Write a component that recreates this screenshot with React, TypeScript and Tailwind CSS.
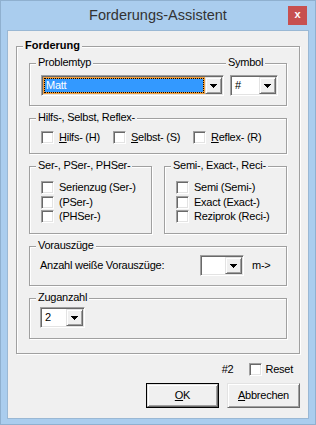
import type { ReactNode } from 'react'

const sunken =
  'border border-t-[#a0a0a0] border-l-[#a0a0a0] border-b-white border-r-white shadow-[inset_1px_1px_0_#696969,inset_-1px_-1px_0_#e3e3e3]'
const raised =
  'border border-t-[#e3e3e3] border-l-[#e3e3e3] border-b-[#696969] border-r-[#696969] shadow-[inset_1px_1px_0_#fff,inset_-1px_-1px_0_#a0a0a0]'

function Group({ className = '', children }: { className?: string; children: ReactNode }) {
  return (
    <div className={`relative border border-[#a0a0a0] shadow-[inset_1px_1px_0_#fff,1px_1px_0_#fff] ${className}`}>
      {children}
    </div>
  )
}

function Legend({ className = '', children }: { className?: string; children: ReactNode }) {
  return <span className={`absolute top-[-8px] bg-[#f0f0f0] px-[2px] leading-[13px] ${className}`}>{children}</span>
}

function Check() {
  return <span className={`h-[13px] w-[13px] shrink-0 bg-white ${sunken}`} />
}

function CheckItem({ className = '', children }: { className?: string; children: ReactNode }) {
  return (
    <label className={`flex h-[13px] items-center gap-[5px] ${className}`}>
      <Check />
      <span>{children}</span>
    </label>
  )
}

function DropButton() {
  return (
    <span className={`flex h-full w-[17px] shrink-0 items-center justify-center bg-[#f0f0f0] ${raised}`}>
      <svg width="7" height="4" viewBox="0 0 7 4" shapeRendering="crispEdges">
        <path d="M0 0h7v1h-1v1h-1v1h-1v1h-1v-1h-1v-1h-1v-1h-1z" fill="#000" />
      </svg>
    </span>
  )
}

function Combo({ className = '', children }: { className?: string; children?: ReactNode }) {
  return (
    <div className={`flex h-[21px] shrink-0 bg-white p-px ${sunken} ${className}`}>
      <div className="flex min-w-0 flex-1 items-center pl-[3px]">{children}</div>
      <DropButton />
    </div>
  )
}

export default function App() {
  return (
    <div className="flex h-[425px] w-[316px] flex-col border border-[#8fb0cf] bg-[#aacdee] font-['Liberation_Sans',Arial,sans-serif] text-[11px] leading-[13px] tracking-[-0.25px] text-black">
      <div className="relative flex h-[29px] shrink-0 items-center justify-center text-[14.5px] tracking-normal text-[#333]">
        Forderungs-Assistent
        <button
          type="button"
          className="absolute right-[8px] top-[5px] flex h-[19px] w-[19px] items-center justify-center bg-[#c75050] pb-[2px] text-[11px] font-bold text-white"
        >
          x
        </button>
      </div>

      <div className="mx-[6px] mb-[5px] flex flex-1 flex-col border border-[#9ab8d4] bg-[#f0f0f0]">
        <Group className="ml-[8px] mt-[15px] flex w-[284px] flex-col pb-[14px] pl-[12px] pt-[16px]">
          <Legend className="left-[6px] font-bold tracking-normal">Forderung</Legend>

          <Group className="flex h-[43px] w-[258px] shrink-0 gap-[6px] pl-[11px] pt-[11px]">
            <Legend className="left-[6px]">Problemtyp</Legend>
            <Legend className="left-[196px]">Symbol</Legend>
            <div className={`flex h-[21px] w-[183px] shrink-0 bg-white p-px ${sunken}`}>
              <div className="flex flex-1 bg-[#f0a040] p-px">
                <span className="flex flex-1 items-center border border-dotted border-black bg-[#3399ff] bg-clip-padding pl-[1px] text-white">
                  Matt
                </span>
              </div>
              <DropButton />
            </div>
            <Combo className="w-[48px]">#</Combo>
          </Group>

          <Group className="mt-[12px] flex h-[36px] w-[258px] shrink-0 pl-[11px] pt-[12px]">
            <Legend className="left-[6px]">Hilfs-, Selbst, Reflex-</Legend>
            <CheckItem className="w-[72px]">
              <u className="underline-offset-[1px]">H</u>ilfs- (H)
            </CheckItem>
            <CheckItem className="w-[80px]">
              <u className="underline-offset-[1px]">S</u>elbst- (S)
            </CheckItem>
            <CheckItem>
              <u className="underline-offset-[1px]">R</u>eflex- (R)
            </CheckItem>
          </Group>

          <div className="mt-[12px] flex gap-[12px]">
            <Group className="flex h-[68px] w-[123px] flex-col gap-[1.5px] pl-[11px] pt-[14px]">
              <Legend className="left-[6px]">Ser-, PSer-, PHSer-</Legend>
              <CheckItem>Serienzug (Ser-)</CheckItem>
              <CheckItem>(PSer-)</CheckItem>
              <CheckItem>(PHSer-)</CheckItem>
            </Group>
            <Group className="flex h-[68px] w-[123px] flex-col gap-[1.5px] pl-[11px] pt-[14px]">
              <Legend className="left-[6px]">Semi-, Exact-, Reci-</Legend>
              <CheckItem>Semi (Semi-)</CheckItem>
              <CheckItem>Exact (Exact-)</CheckItem>
              <CheckItem>Reziprok (Reci-)</CheckItem>
            </Group>
          </div>

          <Group className="mt-[12px] h-[40px] w-[258px] shrink-0 pl-[10px] pt-[8px]">
            <Legend className="left-[6px]">Vorauszüge</Legend>
            <div className="flex h-[21px] items-center">
              <span className="w-[160px]">Anzahl weiße Vorauszüge:</span>
              <Combo className="w-[44px]" />
              <span className="ml-[8px]">m-&gt;</span>
            </div>
          </Group>

          <Group className="mt-[12px] h-[41px] w-[258px] shrink-0 pl-[10px] pt-[8px]">
            <Legend className="left-[6px]">Zuganzahl</Legend>
            <Combo className="w-[45px]">2</Combo>
          </Group>
        </Group>

        <div className="mt-[9px] flex h-[13px] items-center justify-end pr-[15px]">
          <span className="mr-[15px]">#2</span>
          <Check />
          <span className="ml-[4px]">Reset</span>
        </div>

        <div className="mt-[7px] flex justify-end gap-[8px] pr-[8px]">
          <button type="button" className="h-[25px] w-[73px] border border-black bg-[#f0f0f0]">
            <span className={`flex h-full w-full items-center justify-center ${raised}`}>
              <u className="underline-offset-[1px]">O</u>K
            </span>
          </button>
          <button type="button" className={`flex h-[25px] w-[73px] items-center justify-center bg-[#f0f0f0] ${raised}`}>
            <span>
              <u className="underline-offset-[1px]">A</u>bbrechen
            </span>
          </button>
        </div>
      </div>
    </div>
  )
}
